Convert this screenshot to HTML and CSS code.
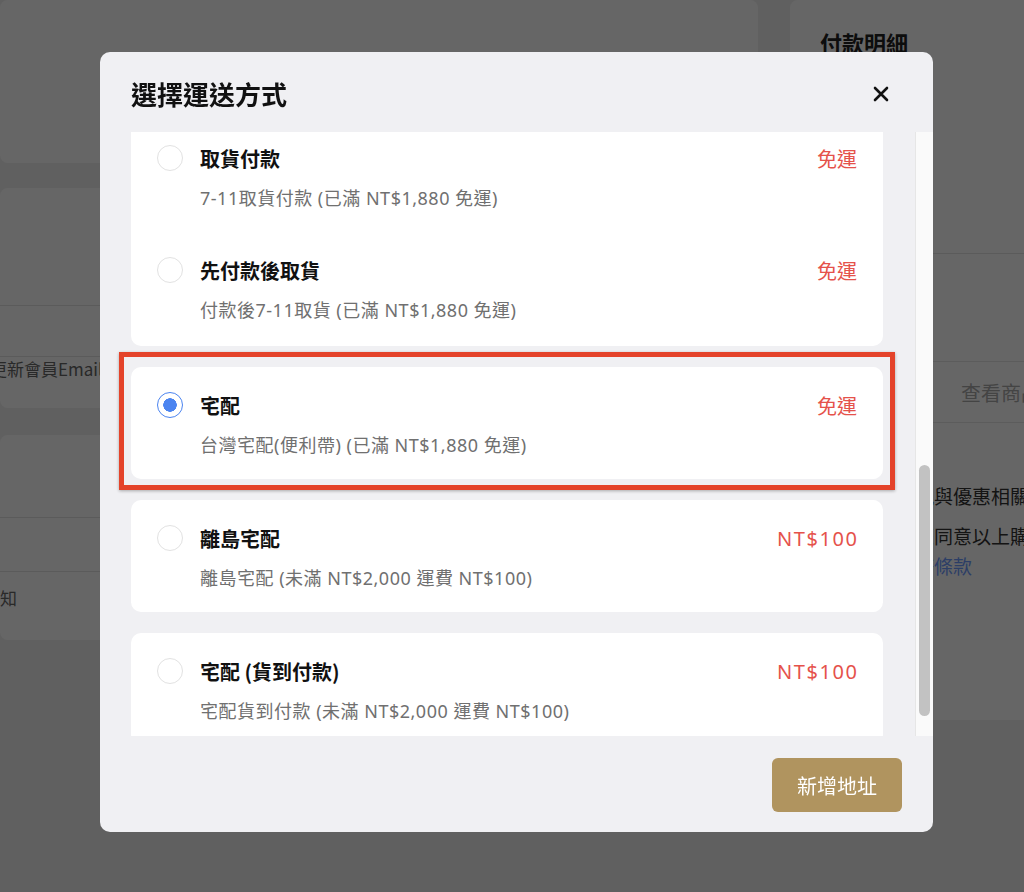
FILE: index.html
```html
<!DOCTYPE html>
<html lang="zh-Hant">
<head>
<meta charset="utf-8">
<title>選擇運送方式</title>
<link rel="stylesheet" href="styles.css">
</head>
<body>
<div class="page">
  <main class="main-col">
    <section class="panel panel-top"></section>
    <section class="panel panel-member">
      <div class="row row-a"></div>
      <div class="row row-b"></div>
      <div class="row row-c"><p class="row-text shift-a">更新會員Email資料</p></div>
    </section>
    <section class="panel panel-notice">
      <div class="row row-d"></div>
      <div class="row row-e"></div>
      <div class="row row-f"><p class="row-text shift-b">接收優惠通知</p></div>
    </section>
  </main>
  <aside class="summary">
    <h2 class="summary-title">付款明細</h2>
    <div class="summary-lines"></div>
    <div class="summary-btn">查看商品明細</div>
    <p class="summary-note">確認商品資訊與優惠相關規定</p>
    <p class="summary-note">結帳即代表您同意以上購買</p>
    <p class="summary-note">須知以及<a class="summary-link">服務條款</a></p>
  </aside>
</div>

<div class="overlay">
  <div class="modal">
    <header class="modal-head">
      <h1 class="modal-title">選擇運送方式</h1>
      <button class="close-btn" aria-label="關閉">
        <svg width="16" height="16" viewBox="0 0 16 16"><path d="M2 2 L14 14 M14 2 L2 14" stroke="#111" stroke-width="2.6" stroke-linecap="round" fill="none"/></svg>
      </button>
    </header>
    <div class="modal-body">
      <div class="list">
        <div class="card card-multi">
          <div class="option">
            <div class="option-row"><span class="radio"></span><span class="option-name">取貨付款</span><span class="price">免運</span></div>
            <p class="option-desc">7-11取貨付款 (已滿 NT$1,880 免運)</p>
          </div>
          <div class="option">
            <div class="option-row"><span class="radio"></span><span class="option-name">先付款後取貨</span><span class="price">免運</span></div>
            <p class="option-desc">付款後7-11取貨 (已滿 NT$1,880 免運)</p>
          </div>
        </div>
        <div class="card card-selected">
          <div class="option">
            <div class="option-row"><span class="radio radio-on"></span><span class="option-name">宅配</span><span class="price">免運</span></div>
            <p class="option-desc">台灣宅配(便利帶) (已滿 NT$1,880 免運)</p>
          </div>
          <span class="highlight"></span>
        </div>
        <div class="card">
          <div class="option">
            <div class="option-row"><span class="radio"></span><span class="option-name">離島宅配</span><span class="price price-num">NT$100</span></div>
            <p class="option-desc">離島宅配 (未滿 NT$2,000 運費 NT$100)</p>
          </div>
        </div>
        <div class="card">
          <div class="option">
            <div class="option-row"><span class="radio"></span><span class="option-name">宅配 (貨到付款)</span><span class="price price-num">NT$100</span></div>
            <p class="option-desc">宅配貨到付款 (未滿 NT$2,000 運費 NT$100)</p>
          </div>
        </div>
      </div>
      <div class="track"><div class="thumb"></div></div>
    </div>
    <footer class="modal-foot">
      <button class="add-btn">新增地址</button>
    </footer>
  </div>
</div>
</body>
</html>
```

FILE: styles.css
```css
* { box-sizing: border-box; }

html, body {
  margin: 0;
  height: 892px;
  overflow: hidden;
}

body {
  background: #f1f1f1;
  font-family: "Noto Sans CJK TC", "Noto Sans", sans-serif;
  color: #222;
}

/* ---------- page underneath ---------- */
.page {
  display: flex;
  gap: 32px;
  width: 1100px;
}

.main-col {
  width: 758px;
  flex: none;
  display: flex;
  flex-direction: column;
}

.panel {
  background: #fff;
  border-radius: 8px;
}

.panel-top { height: 163px; }

.panel-member {
  margin-top: 25px;
  height: 220px;
  display: flex;
  flex-direction: column;
}

.panel-notice {
  margin-top: 27px;
  height: 205px;
  display: flex;
  flex-direction: column;
}

.row { border-top: 1px solid #e4e4e4; }
.row-a { height: 117px; border-top: none; }
.row-b { height: 51px; }
.row-c { flex: 1; }
.row-d { height: 82px; border-top: none; }
.row-e { height: 54px; }
.row-f { flex: 1; }

.row-text {
  margin: 0;
  font-size: 17px;
  line-height: 20px;
  color: #666;
  white-space: nowrap;
}

.shift-a { padding-top: 2px; margin-left: -10px; }
.shift-b { padding-top: 16px; margin-left: -85px; }

.summary {
  width: 310px;
  flex: none;
  height: 720px;
  background: #fff;
  border-radius: 8px;
  padding: 30px 30px 0 30px;
}

.summary-title {
  margin: 0;
  font-size: 22px;
  line-height: 24px;
  font-weight: 700;
  color: #222;
}

.summary-lines {
  height: 200px;
  border-bottom: 1px solid #e4e4e4;
}

.summary-btn {
  margin-top: 107px;
  height: 62px;
  border: 1px solid #e6e6e6;
  border-radius: 6px;
  display: flex;
  align-items: center;
  padding-left: 140px;
  font-size: 20px;
  color: #aaa;
  white-space: nowrap;
}

.summary-note {
  margin: 0;
  font-size: 19px;
  line-height: 40px;
  color: #333;
  white-space: nowrap;
}

.summary-note:first-of-type { margin-top: 53px; }

.summary-note:last-child { line-height: 16px; margin-top: 2px; }

.summary-link { color: #6f9cff; }

/* ---------- overlay & modal ---------- */
.overlay {
  position: fixed;
  inset: 0;
  background: rgba(0, 0, 0, 0.6);
  padding: 52px 0 0 100px;
}

.modal {
  width: 833px;
  height: 780px;
  background: #f0f0f3;
  border-radius: 10px;
  overflow: hidden;
  display: flex;
  flex-direction: column;
}

.modal-head {
  height: 80px;
  flex: none;
  display: flex;
  align-items: center;
  justify-content: space-between;
  padding: 4px 44px 0 31px;
}

.modal-title {
  margin: 0;
  font-size: 26px;
  line-height: 30px;
  font-weight: 700;
  color: #111;
}

.close-btn {
  border: none;
  background: none;
  padding: 0;
  width: 16px;
  height: 16px;
  display: flex;
}

.modal-body {
  flex: 1;
  display: flex;
  min-height: 0;
}

.list {
  flex: 1;
  overflow: hidden;
  padding: 0 32px 0 31px;
  display: flex;
  flex-direction: column;
  gap: 21px;
}

.card {
  background: #fff;
  border-radius: 10px;
  flex: none;
  position: relative;
}

.card-multi {
  margin-top: -12px;
  padding-bottom: 2px;
}

.option {
  padding: 26px 26px 22px 26px;
}

.option-row {
  display: flex;
  align-items: center;
  height: 24px;
}

.radio {
  width: 26px;
  height: 26px;
  border-radius: 50%;
  border: 1px solid #e2e2e2;
  background: #fff;
  flex: none;
  margin-right: 17px;
}

.radio-on {
  border: 1.5px solid #4b84f0;
  background: radial-gradient(circle, #4b84f0 0 6.5px, #fff 7px);
}

.option-name {
  font-size: 20px;
  font-weight: 700;
  color: #111;
  flex: 1;
  white-space: nowrap;
}

.price {
  font-family: "Noto Sans", "Noto Sans CJK TC", sans-serif;
  font-size: 20px;
  color: #e5524b;
  white-space: nowrap;
}

.price-num {
  letter-spacing: 1.6px;
  margin-right: -1.6px;
}

.option-desc {
  margin: 16px 0 0 43px;
  font-family: "Noto Sans", "Noto Sans CJK TC", sans-serif;
  font-size: 18px;
  line-height: 24px;
  letter-spacing: 0.5px;
  color: #707070;
  white-space: nowrap;
}

.highlight {
  position: absolute;
  top: -15px;
  left: -12px;
  right: -12px;
  bottom: -11px;
  border: 5px solid #e4432a;
  box-shadow: 0 1px 3px rgba(0, 0, 0, 0.3);
  pointer-events: none;
}

.track {
  width: 18px;
  flex: none;
  background: #fafafa;
  border-left: 1px solid #e6e6e6;
  padding: 333px 3px 0 3px;
}

.thumb {
  width: 11px;
  height: 251px;
  border-radius: 6px;
  background: #c2c2c2;
}

.modal-foot {
  height: 96px;
  flex: none;
  display: flex;
  justify-content: flex-end;
  align-items: center;
  padding: 2px 31px 0 0;
}

.add-btn {
  width: 130px;
  height: 54px;
  border: none;
  border-radius: 6px;
  background: #b0945f;
  color: #fff;
  font-family: "Noto Sans CJK TC", sans-serif;
  font-size: 20px;
}
```
